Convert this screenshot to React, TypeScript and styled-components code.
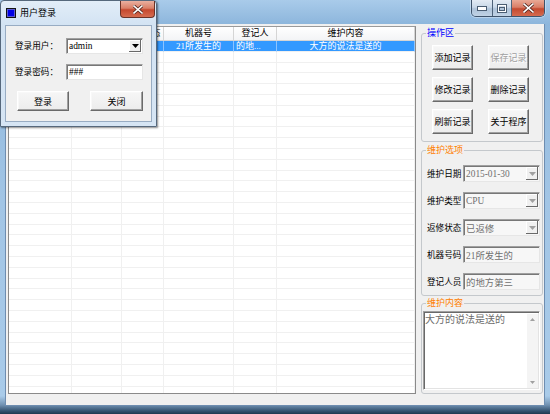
import React from 'react';
import styled, { createGlobalStyle } from 'styled-components';

const Global = createGlobalStyle`
  html, body { margin: 0; padding: 0; width: 550px; height: 414px; overflow: hidden; background: #fff; }
  body { font-family: "Liberation Serif", "Noto Sans CJK SC", "Noto Sans CJK JP", serif; font-size: 9px; color: #000; }
  * { box-sizing: border-box; }
`;

const Win = styled.div`
  position: relative;
  width: 550px;
  height: 414px;
  display: flex;
  flex-direction: column;
  padding: 0 5px 8px 5px;
  background: linear-gradient(180deg, #a9cbea 0px, #8db6dc 24px, #a2c5e5 200px, #a9cbe9 396px, #6f90b1 405px, #34526f 411px, #20384f 414px);
`;

const TitleBar = styled.div`
  height: 24px;
  display: flex;
  justify-content: flex-end;
  align-items: flex-start;
`;

const CaptionGroup = styled.div`
  display: flex;
  height: 17px;
  border: 1px solid #3e536b;
  border-top: none;
  border-radius: 0 0 5px 5px;
  overflow: hidden;
  box-shadow: 0 0 0 1px rgba(255, 255, 255, 0.35);
`;

const CapBtn = styled.div<{ $w: number; $close?: boolean }>`
  width: ${(p) => p.$w}px;
  height: 100%;
  display: flex;
  align-items: center;
  justify-content: center;
  & + & { border-left: 1px solid #4d6279; }
  background: ${(p) =>
    p.$close
      ? 'linear-gradient(180deg, #e9a996 0%, #d97e67 45%, #c44a30 55%, #d46a4f 100%)'
      : 'linear-gradient(180deg, #e3ebf4 0%, #c9d8e8 45%, #aec3d9 55%, #c1d3e5 100%)'};
`;

const Client = styled.div`
  flex: 1;
  display: flex;
  align-items: flex-start;
  gap: 5px;
  padding: 2px 1px 0 2px;
  background: #f0f0f0;
  border: 1px solid #6e8db0;
  border-top: none;
`;

const Table = styled.div`
  width: 408px;
  height: 368px;
  display: flex;
  flex-direction: column;
  background: #fff;
  border: 1px solid #8a8a8a;
  border-top-color: #9a9a9a;
  overflow: hidden;
`;

const GridRow = styled.div<{ $header?: boolean }>`
  display: grid;
  grid-template-columns: 63px 50px 42px 70px 43px 138px;
  flex: none;
  height: ${(p) => (p.$header ? '14px' : '10.8px')};
`;

const HeadCell = styled.div`
  border-right: 1px solid #d5d5d5;
  border-bottom: 1px solid #d5d5d5;
  background: linear-gradient(180deg, #ffffff, #f3f4f6);
  text-align: center;
  line-height: 13px;
  white-space: nowrap;
  overflow: hidden;
`;

const Cell = styled.div<{ $sel?: boolean; $align?: string }>`
  border-right: 1px solid ${(p) => (p.$sel ? '#8cc4ff' : '#f0f0f0')};
  border-bottom: 1px solid #f0f0f0;
  background: ${(p) => (p.$sel ? '#3399ff' : '#fff')};
  color: ${(p) => (p.$sel ? '#fff' : '#000')};
  text-align: ${(p) => p.$align || 'center'};
  padding: 0 2px;
  line-height: 10px;
  white-space: nowrap;
  overflow: hidden;
`;

const Panel = styled.div`
  width: 122px;
  margin-top: 1px;
  display: flex;
  flex-direction: column;
`;

const Group = styled.fieldset<{ $h: number; $mt: number }>`
  margin: ${(p) => p.$mt}px 0 0 0;
  padding: 0;
  min-width: 0;
  height: ${(p) => p.$h}px;
  border: 1px solid #c4c8cc;
  border-radius: 3px;
`;

const Legend = styled.legend<{ $color: string }>`
  margin-left: 4px;
  padding: 0 1px;
  line-height: 12px;
  font-size: 9px;
  color: ${(p) => p.$color};
`;

const BtnGrid = styled.div`
  display: grid;
  grid-template-columns: 41px 41px;
  grid-auto-rows: 25px;
  column-gap: 15px;
  row-gap: 7px;
  padding: 6px 0 0 10px;
`;

const Btn = styled.div<{ $w?: number; $h?: number; $disabled?: boolean }>`
  width: ${(p) => p.$w ?? 41}px;
  height: ${(p) => p.$h ?? 25}px;
  display: flex;
  align-items: center;
  justify-content: center;
  white-space: nowrap;
  font-size: 9px;
  color: ${(p) => (p.$disabled ? '#a0a0a0' : '#000')};
  text-shadow: ${(p) => (p.$disabled ? '1px 1px 0 #fff' : 'none')};
  background: linear-gradient(180deg, #f6f6f6, #ececec);
  border: 1px solid;
  border-color: #ffffff #6a6a6a #6a6a6a #ffffff;
  box-shadow: inset -1px -1px #a0a0a0, inset 1px 1px #f8f8f8;
`;

const FormGrid = styled.div<{ $label: number; $row: number; $gap: number; $pad: string }>`
  display: grid;
  grid-template-columns: ${(p) => p.$label}px 77px;
  grid-auto-rows: ${(p) => p.$row}px;
  row-gap: ${(p) => p.$gap}px;
  align-items: center;
  padding: ${(p) => p.$pad};
`;

const Label = styled.div`
  justify-self: start;
  white-space: nowrap;
  line-height: 12px;
  font-size: 8.6px;
`;

const Field = styled.div<{ $disabled?: boolean }>`
  height: 100%;
  display: flex;
  border: 1px solid;
  border-color: #a0a0a0 #e6e6e6 #e6e6e6 #a0a0a0;
  box-shadow: inset 1px 1px #777;
  background: ${(p) => (p.$disabled ? '#f7f7f7' : '#fff')};
  color: ${(p) => (p.$disabled ? '#707070' : '#000')};
`;

const FieldText = styled.div`
  flex: 1;
  padding: 0 0 0 2px;
  display: flex;
  align-items: center;
  white-space: nowrap;
  overflow: hidden;
  font-size: 9.4px;
`;

const DropBtn = styled.div`
  width: 12px;
  margin: 1px 1px 1px 0;
  display: flex;
  align-items: center;
  justify-content: center;
  background: #f0f0f0;
  box-shadow: inset -1px -1px #696969, inset 1px 1px #fff;
`;

const Memo = styled.div`
  width: 117px;
  height: 79px;
  margin: 2px 0 0 1px;
  display: flex;
  border: 1px solid;
  border-color: #a0a0a0 #fff #fff #a0a0a0;
  box-shadow: inset 1px 1px #696969, inset -1px -1px #e3e3e3;
  background: #fff;
  padding: 2px 1px 1px 1px;
`;

const MemoText = styled.div`
  flex: 1;
  color: #6d6d6d;
  font-size: 10px;
  line-height: 12px;
`;

const ScrollBar = styled.div`
  width: 11px;
  display: flex;
  flex-direction: column;
  justify-content: space-between;
  align-items: center;
  background: #f4f4f4;
  padding: 4px 0;
`;

const Dlg = styled.div`
  position: absolute;
  left: 0;
  top: 0;
  width: 157px;
  height: 127px;
  display: flex;
  flex-direction: column;
  padding: 0 4px 4px 4px;
  border: 1px solid #56687c;
  border-radius: 4px 4px 0 0;
  background: linear-gradient(180deg, #e2edf8 0px, #d3e3f3 24px, #d6e5f4 127px);
  box-shadow: 1px 1px 2px rgba(0, 0, 0, 0.45);
`;

const DlgTitle = styled.div`
  height: 24px;
  margin: 0 -4px;
  padding-left: 5px;
  display: flex;
  align-items: flex-start;
`;

const DlgIcon = styled.div`
  width: 10px;
  height: 10px;
  margin-top: 7px;
  border: 1px solid #111;
  background: #0000e6;
  box-shadow: inset 0 0 0 1px #5a5ad0;
`;

const DlgTitleText = styled.div`
  margin: 6px 0 0 4px;
  line-height: 12px;
  font-size: 9px;
`;

const DlgClose = styled.div`
  margin-left: auto;
  margin-right: 1px;
  width: 35px;
  height: 17px;
  display: flex;
  align-items: center;
  justify-content: center;
  border: 1px solid #6a3227;
  border-top: none;
  border-radius: 0 0 4px 4px;
  background: linear-gradient(180deg, #eab0a0 0%, #da8068 45%, #c5492f 55%, #d66c50 100%);
`;

const DlgClient = styled.div`
  flex: 1;
  display: flex;
  flex-direction: column;
  background: #f0f0f0;
  border: 1px solid #98acc3;
  padding: 12px 0 0 9px;
`;

const DlgButtons = styled.div`
  display: flex;
  gap: 21px;
  margin-top: 11px;
  padding-left: 2px;
`;

const Arrow = ({ color }: { color: string }) => (
  <svg width="7" height="4" viewBox="0 0 7 4">
    <path d="M0 0 H7 L3.5 4 Z" fill={color} />
  </svg>
);

const UpArrow = () => (
  <svg width="5" height="3" viewBox="0 0 5 3">
    <path d="M0 3 H5 L2.5 0 Z" fill="#a0a0a0" />
  </svg>
);

const DownArrow = () => (
  <svg width="5" height="3" viewBox="0 0 5 3">
    <path d="M0 0 H5 L2.5 3 Z" fill="#a0a0a0" />
  </svg>
);

const CloseGlyph = ({ w = 9, h = 8 }: { w?: number; h?: number }) => (
  <svg width={w + 2} height={h + 2} viewBox={`-1 -1 ${w + 2} ${h + 2}`}>
    <path d={`M0 0 L${w} ${h} M${w} 0 L0 ${h}`} stroke="#5a2a22" strokeWidth="3.2" strokeLinecap="square" />
    <path d={`M0 0 L${w} ${h} M${w} 0 L0 ${h}`} stroke="#fff" strokeWidth="1.6" strokeLinecap="square" />
  </svg>
);

const MinGlyph = () => (
  <svg width="10" height="5" viewBox="0 0 10 5">
    <rect x="0.5" y="0.5" width="9" height="4" fill="#fff" stroke="#4a5d72" />
  </svg>
);

const MaxGlyph = () => (
  <svg width="10" height="9" viewBox="0 0 10 9">
    <rect x="0.5" y="0.5" width="9" height="8" fill="none" stroke="#4a5d72" />
    <rect x="1.5" y="1.5" width="7" height="6" fill="none" stroke="#fff" />
    <rect x="2.5" y="3.5" width="5" height="3" fill="none" stroke="#4a5d72" />
  </svg>
);

const Combo = ({ value, disabled }: { value: string; disabled?: boolean }) => (
  <Field $disabled={disabled}>
    <FieldText>{value}</FieldText>
    <DropBtn>
      <Arrow color={disabled ? '#a0a0a0' : '#000'} />
    </DropBtn>
  </Field>
);

const TextBox = ({ value, disabled }: { value: string; disabled?: boolean }) => (
  <Field $disabled={disabled}>
    <FieldText>{value}</FieldText>
  </Field>
);

const headers = ['维护日期', '维护类型', '返修状态', '机器号', '登记人', '维护内容'];
const firstRow: { t: string; a?: string }[] = [
  { t: '' },
  { t: '' },
  { t: '' },
  { t: '21所发生的' },
  { t: '的地...', a: 'left' },
  { t: '大方的说法是送的' },
];

export default function App() {
  const emptyRows = Array.from({ length: 33 }, (_, i) => i);
  return (
    <>
      <Global />
      <Win>
        <TitleBar>
          <CaptionGroup>
            <CapBtn $w={20}>
              <MinGlyph />
            </CapBtn>
            <CapBtn $w={19}>
              <MaxGlyph />
            </CapBtn>
            <CapBtn $w={33} $close>
              <CloseGlyph />
            </CapBtn>
          </CaptionGroup>
        </TitleBar>
        <Client>
          <Table>
            <GridRow $header>
              {headers.map((h) => (
                <HeadCell key={h}>{h}</HeadCell>
              ))}
            </GridRow>
            <GridRow>
              {firstRow.map((c, i) => (
                <Cell key={i} $sel $align={c.a}>
                  {c.t}
                </Cell>
              ))}
            </GridRow>
            {emptyRows.map((r) => (
              <GridRow key={r}>
                {headers.map((h) => (
                  <Cell key={h} />
                ))}
              </GridRow>
            ))}
          </Table>
          <Panel>
            <Group $h={115} $mt={0}>
              <Legend $color="#0000ff">操作区</Legend>
              <BtnGrid>
                <Btn>添加记录</Btn>
                <Btn $disabled>保存记录</Btn>
                <Btn>修改记录</Btn>
                <Btn>删除记录</Btn>
                <Btn>刷新记录</Btn>
                <Btn>关于程序</Btn>
              </BtnGrid>
            </Group>
            <Group $h={152} $mt={2}>
              <Legend $color="#ff8000">维护选项</Legend>
              <FormGrid $label={36} $row={17} $gap={10} $pad="9px 0 0 5px">
                <Label>维护日期</Label>
                <Combo value="2015-01-30" disabled />
                <Label>维护类型</Label>
                <Combo value="CPU" disabled />
                <Label>返修状态</Label>
                <Combo value="已返修" disabled />
                <Label>机器号码</Label>
                <TextBox value="21所发生的" disabled />
                <Label>登记人员</Label>
                <TextBox value="的地方第三" disabled />
              </FormGrid>
            </Group>
            <Group $h={97} $mt={1}>
              <Legend $color="#ff8000">维护内容</Legend>
              <Memo>
                <MemoText>大方的说法是送的</MemoText>
                <ScrollBar>
                  <UpArrow />
                  <DownArrow />
                </ScrollBar>
              </Memo>
            </Group>
          </Panel>
        </Client>

        <Dlg>
          <DlgTitle>
            <DlgIcon />
            <DlgTitleText>用户登录</DlgTitleText>
            <DlgClose>
              <CloseGlyph w={8} h={7} />
            </DlgClose>
          </DlgTitle>
          <DlgClient>
            <FormGrid $label={51} $row={16} $gap={10} $pad="0">
              <Label>登录用户：</Label>
              <Combo value="admin" />
              <Label>登录密码：</Label>
              <TextBox value="###" />
            </FormGrid>
            <DlgButtons>
              <Btn $w={52} $h={20}>登录</Btn>
              <Btn $w={53} $h={20}>关闭</Btn>
            </DlgButtons>
          </DlgClient>
        </Dlg>
      </Win>
    </>
  );
}
